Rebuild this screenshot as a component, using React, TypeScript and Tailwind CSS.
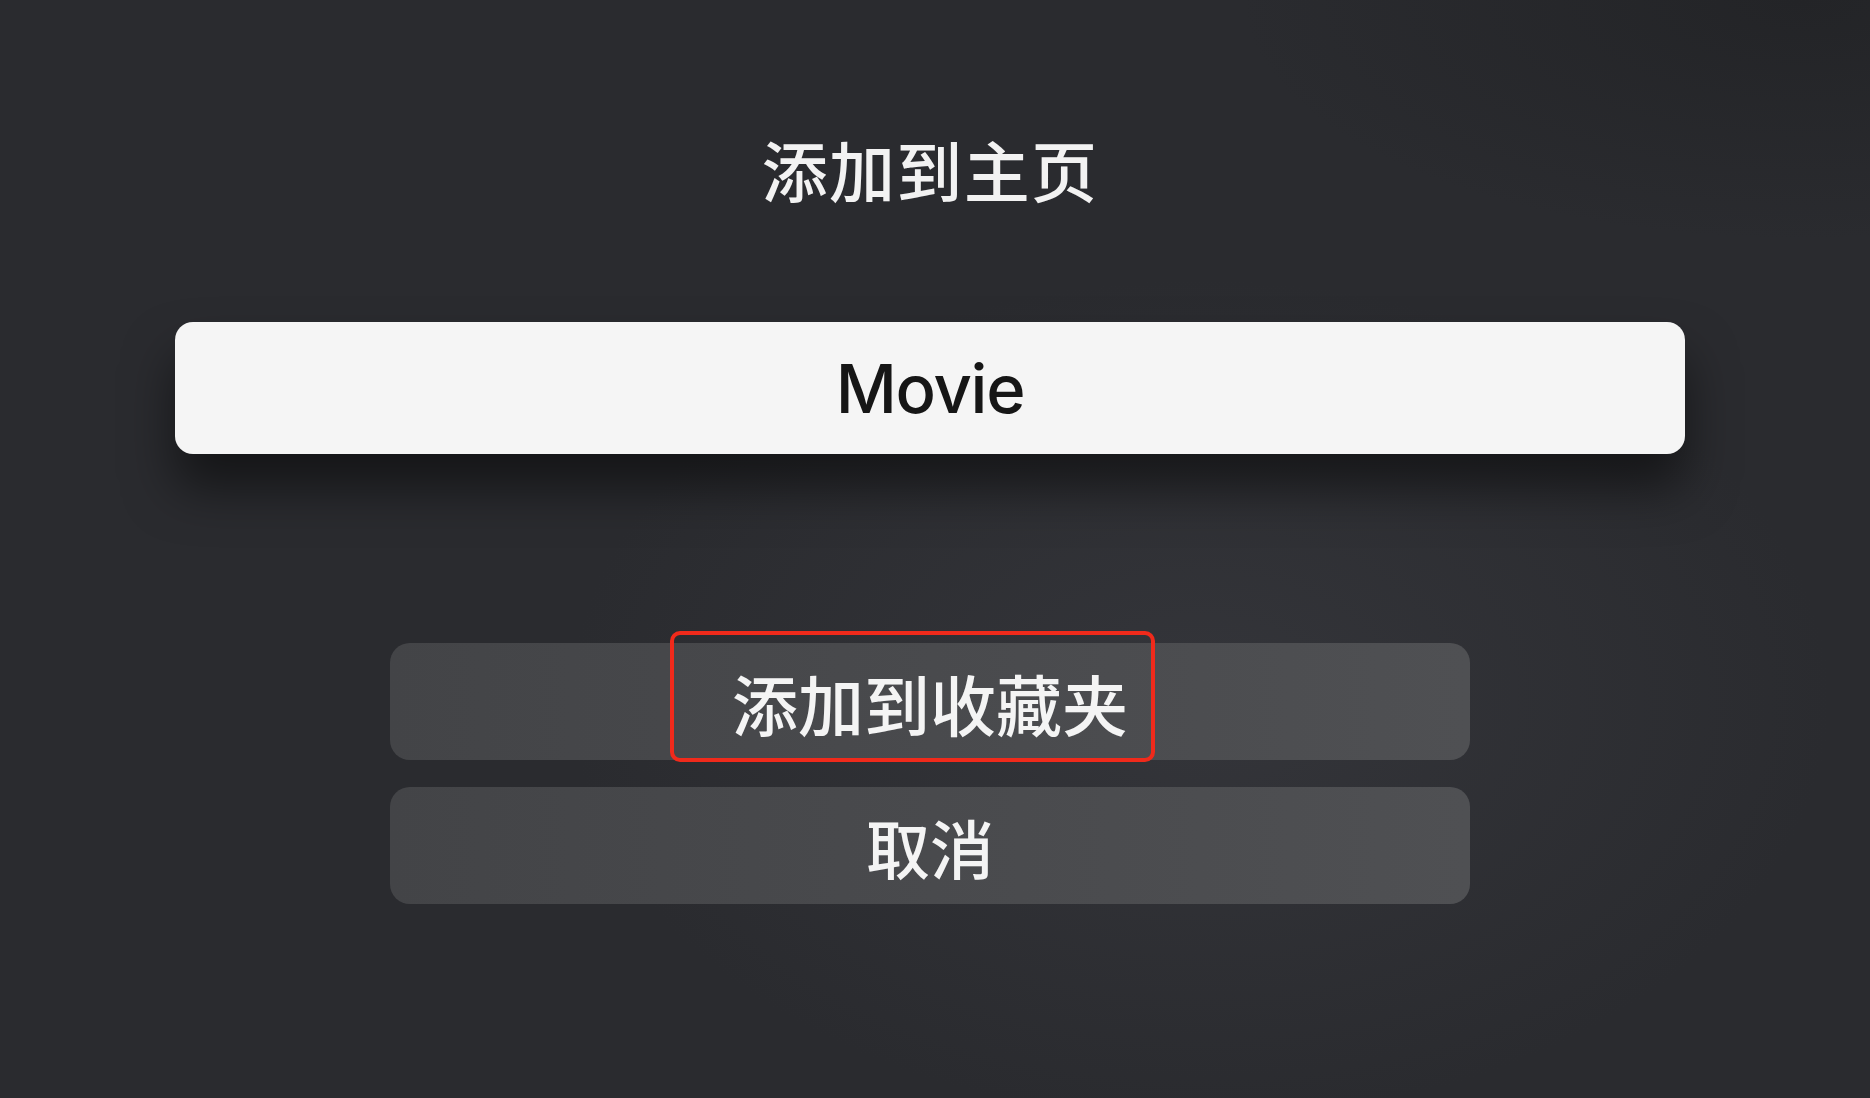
export default function App() {
  return (
    <div
      className="relative w-[1870px] h-[1098px] overflow-hidden bg-[#2a2b2f] bg-[radial-gradient(ellipse_900px_600px_at_1200px_700px,#34353a_0%,rgba(42,43,47,0)_70%),radial-gradient(ellipse_700px_300px_at_1800px_0px,#232427_0%,rgba(35,36,39,0)_80%)] flex flex-col items-center pr-[10px]"
      style={{ fontFamily: '"Noto Sans CJK SC", "Noto Sans", sans-serif' }}
    >
      {/* Title */}
      <h1 className="mt-[135px] text-[66px] leading-none text-[#f2f2f2] font-medium tracking-[0.02em]">
        添加到主页
      </h1>

      {/* Selected item card */}
      <div className="mt-[121px] w-[1510px] h-[132px] rounded-[18px] bg-[#f5f5f5] flex items-center justify-center shadow-[0_34px_50px_rgba(0,0,0,0.5)]">
        <span className="font-['Inter',sans-serif] font-medium text-[67px] leading-none tracking-[-0.02em] text-[#161616]">
          Movie
        </span>
      </div>

      {/* Actions */}
      <div className="mt-[189px] w-[1080px] flex flex-col gap-[27px]">
        <div className="relative h-[117px] rounded-[20px] bg-gradient-to-r from-[#434447] to-[#4f5053] flex items-center justify-center">
          <span className="text-[66px] leading-none font-medium text-[#f4f4f4]">添加到收藏夹</span>
          {/* annotation box */}
          <div className="absolute left-[280px] top-[-12px] w-[485px] h-[131px] rounded-[10px] border-[4px] border-[#f02a1b]" />
        </div>
        <div className="h-[117px] rounded-[20px] bg-gradient-to-r from-[#434447] to-[#4f5053] flex items-center justify-center">
          <span className="text-[64px] leading-none font-medium text-[#f4f4f4]">取消</span>
        </div>
      </div>
    </div>
  )
}
